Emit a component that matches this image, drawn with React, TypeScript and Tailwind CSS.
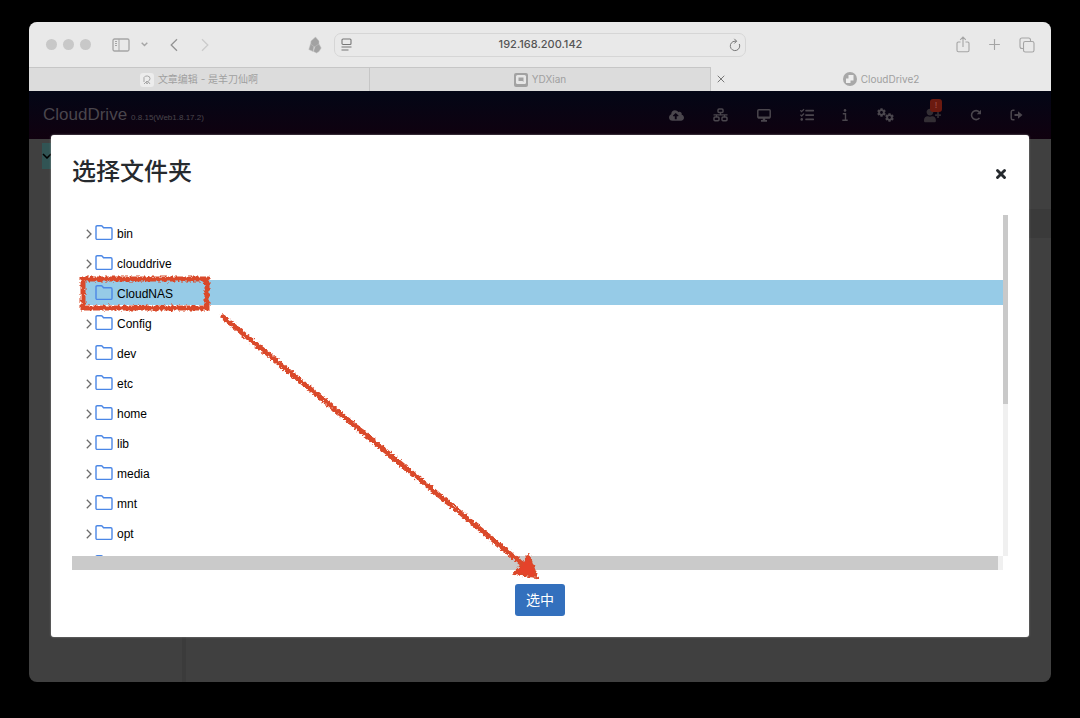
import type { ReactNode } from 'react';
import { Plus, X } from 'lucide-react';
import {
  FaCloudUploadAlt,
  FaCog,
  FaTasks,
  FaUserPlus,
} from 'react-icons/fa';

const folders = [
  { name: 'bin' },
  { name: 'clouddrive' },
  { name: 'CloudNAS', selected: true },
  { name: 'Config' },
  { name: 'dev' },
  { name: 'etc' },
  { name: 'home' },
  { name: 'lib' },
  { name: 'media' },
  { name: 'mnt' },
  { name: 'opt' },
];

function IconButton({ label, className = '', children }: { label: string; className?: string; children: ReactNode }) {
  return (
    <button type="button" aria-label={label} className={`flex shrink-0 items-center justify-center ${className}`}>
      {children}
    </button>
  );
}

function SidebarIcon() {
  return (
    <svg width="18" height="14" viewBox="0 0 18 14" fill="none" stroke="currentColor">
      <rect x="1" y="1" width="16" height="12" rx="1.5" strokeWidth="1.3" />
      <path d="M7 1v12M3 3.5h2M3 5.5h2M3 7.5h2" />
    </svg>
  );
}

function ReaderIcon() {
  return (
    <svg width="11" height="13" viewBox="0 0 11 13" fill="none" stroke="currentColor" strokeWidth="1.1">
      <rect x="1" y="1" width="9" height="5.5" rx="1" />
      <path d="M.5 9h10M.5 12h7" />
    </svg>
  );
}

function ReloadIcon() {
  return (
    <svg width="12" height="14" viewBox="0 0 12 14" fill="none" stroke="currentColor" strokeWidth="1">
      <path d="M10.3 6A4.7 4.7 0 1 1 6 3.2h1.5M5.3.8l2.3 2.4-2.3 2.3" />
    </svg>
  );
}

function ShareIcon() {
  return (
    <svg width="14" height="17" viewBox="0 0 14 17" fill="none" stroke="currentColor" strokeWidth="1.1">
      <path d="M4.5 6H2.3Q1 6 1 7.3v7Q1 15.7 2.3 15.7h9.4q1.3 0 1.3-1.4v-7Q13 6 11.7 6H9.5M7 11V1M4.2 3.8 7 1l2.8 2.8" />
    </svg>
  );
}

function TabsIcon() {
  return (
    <svg width="16" height="16" viewBox="0 0 16 16" fill="none" stroke="currentColor" strokeWidth="1.1">
      <rect x="4.5" y="4.5" width="10.5" height="10.5" rx="1.8" />
      <path d="M4.5 11.5H3q-2 0-2-2V3q0-2 2-2h6.5q2 0 2 2v1.5" />
    </svg>
  );
}

function PlumeIcon() {
  return (
    <svg width="14" height="18" viewBox="0 0 14 18" fill="#a2a2a2" stroke="#c4c4c4" strokeWidth=".5">
      <path d="M3 5 7.5 1 11 5v5L7 11 2.5 9.5z" />
      <path d="M2.5 8 6 10.5 5 15.5.8 13.5z" />
      <path d="m11 8 2.2 4L11 15.5 8.5 17l-3-1.5L7 10.5z" />
    </svg>
  );
}

function NetworkIcon() {
  return (
    <svg width="15" height="14" viewBox="0 0 15 14" fill="none" stroke="currentColor" strokeWidth="1.5">
      <rect x="5" y="1" width="5" height="3.5" rx="1" />
      <rect x="1" y="9" width="5" height="3.8" rx="1" />
      <rect x="9" y="9" width="5" height="3.8" rx="1" />
      <path d="M7.5 4.5v2.3M.5 6.9h14M3.5 7v2M11.5 7v2" strokeWidth="1.2" />
    </svg>
  );
}

function DesktopIcon() {
  return (
    <svg width="14" height="13" viewBox="0 0 14 13" fill="none" stroke="currentColor" strokeWidth="1.5">
      <rect x=".8" y=".8" width="12.4" height="8" rx="1" />
      <path d="M.8 8.5h12.4M4 11.8h6" strokeWidth="1.8" />
      <path d="M7 9v3" strokeWidth="2.5" />
    </svg>
  );
}

function InfoIcon() {
  return (
    <svg width="6" height="12" viewBox="0 0 6 12" fill="none" stroke="currentColor" strokeWidth="1.4">
      <circle cx="3" cy="1.4" r="1.3" fill="currentColor" stroke="none" />
      <path d="M.8 4.8h2.700v6.300M.3 11.2h5.4" />
    </svg>
  );
}

function RotateIcon() {
  return (
    <svg width="12" height="12" viewBox="0 0 12 12" fill="none" stroke="currentColor" strokeWidth="1.6">
      <path d="M9.5 9A4.5 4.5 0 1 1 9.3 3" />
      <path d="M11 .8v4.400H6.800z" fill="currentColor" stroke="none" />
    </svg>
  );
}

function LogoutIcon() {
  return (
    <svg width="13" height="12" viewBox="0 0 13 12" fill="none" stroke="currentColor" strokeWidth="1.5">
      <path d="M4.5 1.2H2.8Q1.2 1.2 1.2 3v6q0 1.8 1.6 1.8h1.7" />
      <path d="M4.5 6h5" strokeWidth="2.2" />
      <path d="M8 2.2 12.5 6 8 9.8z" fill="currentColor" stroke="none" />
    </svg>
  );
}

function FolderIcon() {
  return (
    <svg width="18" height="16" viewBox="0 0 18 16" fill="none" stroke="#4b87e6" strokeWidth="1.4" className="shrink-0">
      <path d="M1 13.2V2Q1 .8 2.2.8h4q.7 0 1.1.5l1.200 1.500h7.300q1.200 0 1.200 1.200v9.200q0 1.200-1.200 1.200H2.200Q1 14.400 1 13.200z" />
    </svg>
  );
}

function Toolbar() {
  return (
    <div className="flex h-[45px] items-center bg-[#e9e9e9] text-[#a5a5a5]">
      <div className="flex flex-1 items-center pr-3 pl-[17px]">
        <div className="flex gap-[6px]">
          <span className="size-[11px] rounded-full bg-[#c8c8c8]" />
          <span className="size-[11px] rounded-full bg-[#c8c8c8]" />
          <span className="size-[11px] rounded-full bg-[#c8c8c8]" />
        </div>
        <IconButton label="Sidebar" className="ml-[21px]">
          <SidebarIcon />
        </IconButton>
        <IconButton label="Tab groups" className="ml-[11px]">
          <svg width="7" height="5" viewBox="0 0 7 5" fill="none" stroke="currentColor" strokeWidth="1.4">
            <path d="m.7.8 2.8 2.8L6.3.8" />
          </svg>
        </IconButton>
        <IconButton label="Back" className="ml-[22px]">
          <svg width="8" height="14" viewBox="0 0 8 14" fill="none" stroke="#949494" strokeWidth="1.3">
            <path d="M7 1.2 1.2 7 7 12.8" />
          </svg>
        </IconButton>
        <IconButton label="Forward" className="ml-[23px]">
          <svg width="8" height="14" viewBox="0 0 8 14" fill="none" stroke="#cbcbcb" strokeWidth="1.3">
            <path d="M1 1.2 6.8 7 1 12.8" />
          </svg>
        </IconButton>
        <IconButton label="Extension" className="ml-auto">
          <PlumeIcon />
        </IconButton>
      </div>
      <div className="flex h-6 w-[412px] items-center rounded-[7px] border border-[#d6d6d6] pr-1 pl-[6px] text-[#777]">
        <ReaderIcon />
        <input
          aria-label="Address"
          defaultValue="192.168.200.142"
          className="min-w-0 flex-1 bg-transparent text-center font-[Inter,sans-serif] text-[11px] font-medium text-[#555] outline-none"
        />
        <IconButton label="Reload">
          <ReloadIcon />
        </IconButton>
      </div>
      <div className="flex flex-1 items-center justify-end gap-4 pr-4 pl-[13px]">
        <IconButton label="Share">
          <ShareIcon />
        </IconButton>
        <IconButton label="New tab">
          <Plus size={17} strokeWidth={1.6} />
        </IconButton>
        <IconButton label="Show tabs">
          <TabsIcon />
        </IconButton>
      </div>
    </div>
  );
}

function TabBar() {
  return (
    <div className="flex h-6 font-[Inter,'Noto_Sans_CJK_SC',sans-serif] text-[10px] text-[#a0a0a0]">
      <button type="button" className="flex flex-1 items-center justify-center gap-1 border-t border-r border-[#c6c6c6] bg-[#dcdcdc]">
        <svg width="14" height="14" viewBox="0 0 14 14" fill="none">
          <rect width="14" height="14" rx="3" fill="#ececec" />
          <path d="M4 9V4.5Q5 2.5 7.5 3q2.5.3 2.5 2.5 0 2-2 3H6M4 11l2-2 1 2 1.5-2 1.5 2" stroke="#a5a5a5" />
        </svg>
        <span>文章编辑 - 是羊刀仙啊</span>
      </button>
      <button type="button" className="flex flex-1 items-center justify-center gap-1 border-t border-r border-[#c6c6c6] bg-[#dcdcdc]">
        <svg width="14" height="14" viewBox="0 0 14 14">
          <rect width="14" height="14" rx="2" fill="#a2a2a2" />
          <rect x="2" y="2" width="10" height="9" rx="1.5" fill="#e6e6e6" />
          <path d="M4.5 4.5h5V9l-1-1h-4z" fill="#a2a2a2" />
        </svg>
        <span>YDXian</span>
      </button>
      <div className="flex flex-1 items-center bg-[#e9e9e9]">
        <IconButton label="Close tab" className="ml-1 text-[#777]">
          <X size={12} strokeWidth={2} />
        </IconButton>
        <button type="button" className="mr-4 flex flex-1 items-center justify-center gap-1">
          <svg width="14" height="14" viewBox="0 0 14 14">
            <circle cx="7" cy="7" r="7" fill="#a8a8a8" />
            <path d="M5.5 3h5v5.5h-3V11H3V6.5h2.5z" fill="#eee" />
          </svg>
          <span>CloudDrive2</span>
        </button>
      </div>
    </div>
  );
}

function AppHeader() {
  return (
    <header className="flex h-12 items-center justify-between bg-linear-to-b from-[#030616] to-[#10010f] pr-7 pl-[14px] text-[#4a464d]">
      <h1 className="flex items-baseline gap-1 text-[17px]">
        CloudDrive
        <small className="text-[8px]">0.8.15(Web1.8.17.2)</small>
      </h1>
      <nav className="flex items-center gap-7">
        <IconButton label="Upload" className="w-4">
          <FaCloudUploadAlt size={15} />
        </IconButton>
        <IconButton label="Network" className="w-4">
          <NetworkIcon />
        </IconButton>
        <IconButton label="Desktop" className="w-[15px]">
          <DesktopIcon />
        </IconButton>
        <IconButton label="Tasks" className="w-[15px]">
          <FaTasks size={14} />
        </IconButton>
        <IconButton label="Info" className="w-[6px]">
          <InfoIcon />
        </IconButton>
        <IconButton label="Settings" className="w-[19px]">
          <FaCog size={9} className="mb-[5px]" />
          <FaCog size={9} className="mt-[5px] -ml-px" />
        </IconButton>
        <IconButton label="Account" className="relative w-[19px] text-[#332e34]">
          <FaUserPlus size={17} />
          <span className="absolute -top-2 right-0 h-[13px] w-3 rounded-[3px] bg-[#6b1a10] text-center text-[9px] leading-[13px] text-[#a3574c]">!</span>
        </IconButton>
        <IconButton label="Refresh">
          <RotateIcon />
        </IconButton>
        <IconButton label="Sign out">
          <LogoutIcon />
        </IconButton>
      </nav>
    </header>
  );
}

function FolderTree() {
  return (
    <div>
      <div className="flex h-[341px]">
        <ul className="flex-1 space-y-[5px] overflow-hidden pt-[5px] pl-[13px]">
          {folders.map(folder => (
            <li key={folder.name} className={folder.selected ? 'bg-[#96cbe7]' : ''}>
              <button type="button" className="flex h-[25px] w-full items-center pl-px text-xs text-black">
                <svg
                  width="6"
                  height="10"
                  viewBox="0 0 6 10"
                  fill="none"
                  stroke="#6b6b6b"
                  strokeWidth="1.3"
                  className={folder.selected ? 'invisible mt-[2px]' : 'mt-[2px]'}
                >
                  <path d="M.8.8 5 5 .8 9.2" />
                </svg>
                <span className="ml-[3px] flex items-center gap-1">
                  <FolderIcon />
                  <span className="pt-[3px]">{folder.name}</span>
                </span>
              </button>
            </li>
          ))}
          <li className="flex h-[25px] items-center pl-[10px]">
            <FolderIcon />
          </li>
        </ul>
        <div className="w-[5px] bg-[#f0f0f0]">
          <div className="h-[189px] bg-[#c9c9c9]" />
        </div>
      </div>
      <div className="mr-[5px] h-[14px] bg-[#f0f0f0] pr-[5px]">
        <div className="h-full bg-[#cacaca]" />
      </div>
    </div>
  );
}

// Hand-drawn marker: a box round the selected row and an arrow to the confirm button
function MarkerOverlay() {
  return (
    <svg className="pointer-events-none absolute top-0 left-0" width="520" height="460" viewBox="0 0 520 460" fill="none">
      <filter id="chalk" x="-5%" y="-5%" width="110%" height="110%">
        <feTurbulence type="fractalNoise" baseFrequency=".4" numOctaves="2" seed="4" />
        <feDisplacementMap in="SourceGraphic" scale="5" xChannelSelector="R" yChannelSelector="G" />
      </filter>
      <g filter="url(#chalk)" stroke="#da4a2c">
        <rect x="32" y="144" width="124" height="29" strokeWidth="5" />
        <path d="M172 182 475 432" strokeWidth="5" strokeLinecap="round" />
        <path d="M478 420 486 442 463 439z" fill="#e5422a" strokeWidth="2" />
      </g>
    </svg>
  );
}

function FolderDialog() {
  return (
    <section
      role="dialog"
      aria-labelledby="dialog-title"
      className="absolute inset-x-[22px] top-11 rounded-[3px] bg-white px-[21px] pt-[21px] pb-[21px] shadow-[0_0_2px_#999]"
    >
      <div className="mb-[27px] flex h-8 items-center justify-between text-[#262a2e]">
        <h2 id="dialog-title" className="text-2xl font-medium">选择文件夹</h2>
        <IconButton label="Close" className="mt-1">
          <X size={14} strokeWidth={5} />
        </IconButton>
      </div>
      <FolderTree />
      <div className="mt-[14px] flex justify-center">
        <button type="button" className="h-8 w-[50px] rounded-[3px] bg-[#3370bd] text-sm text-white">
          选中
        </button>
      </div>
      <MarkerOverlay />
    </section>
  );
}

export default function App() {
  return (
    <div className="min-h-screen bg-black px-[29px] pt-[22px] pb-9 font-['Liberation_Sans','Noto_Sans_CJK_SC',sans-serif]">
      <main className="overflow-hidden rounded-lg bg-[#404040]">
        <Toolbar />
        <TabBar />
        <div className="relative">
          <AppHeader />
          <div className="flex h-[543px] pt-1">
            <div className="w-[157px] border-r-4 border-[#3b3b3b] pl-[13px]">
              <div className="flex h-[26px] w-8 items-center bg-[#315454] text-black">
                <svg width="10" height="6" viewBox="0 0 10 6" fill="none" stroke="currentColor" strokeWidth="1.5">
                  <path d="m1 1 4 4 4-4" />
                </svg>
              </div>
            </div>
            <div className="flex-1 pt-[66px]">
              <div className="h-[29px] bg-[#3a3a3a]" />
            </div>
          </div>
          <FolderDialog />
        </div>
      </main>
    </div>
  );
}
